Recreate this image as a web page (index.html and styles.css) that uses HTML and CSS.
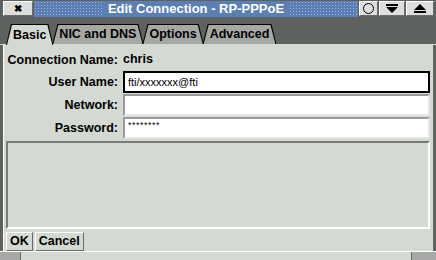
FILE: index.html
```html
<!DOCTYPE html>
<html lang="en">
<head>
  <meta charset="UTF-8">
  <title>Edit Connection - RP-PPPoE</title>
  <link rel="stylesheet" href="styles.css">
</head>
<body>
  <div class="window">
    <div class="titlebar">
      <div class="tb-btn close">&#x2716;</div>
      <div class="title"><span>Edit Connection - RP-PPPoE</span></div>
      <div class="tb-btn circle"><span class="ring"></span></div>
      <div class="tb-btn shade">
        <svg width="12" height="9" viewBox="0 0 12 9"><rect x="0" y="0" width="12" height="2" fill="#000"/><polygon points="0,3 12,3 6,9" fill="#000"/></svg>
      </div>
      <div class="tb-btn max">
        <svg width="12" height="9" viewBox="0 0 12 9"><polygon points="6,0 12,6 0,6" fill="#000"/><rect x="0" y="7" width="12" height="2" fill="#000"/></svg>
      </div>
    </div>

    <div class="tabbar">
      <div class="tab active"><span class="tab-fill">Basic</span></div>
      <div class="tab"><span class="tab-fill">NIC and DNS</span></div>
      <div class="tab"><span class="tab-fill">Options</span></div>
      <div class="tab"><span class="tab-fill">Advanced</span></div>
    </div>

    <div class="content">
      <div class="form">
        <label>Connection Name:</label>
        <div class="value">chris</div>
        <label>User Name:</label>
        <div class="field focus">fti/xxxxxxx@fti</div>
        <label>Network:</label>
        <div class="field"></div>
        <label>Password:</label>
        <div class="field pw">********</div>
      </div>
      <div class="panel"></div>
      <div class="buttons">
        <div class="btn">OK</div>
        <div class="btn">Cancel</div>
      </div>
    </div>

    <div class="status">
      <div class="seg left"></div>
      <div class="seg mid"></div>
      <div class="seg right"></div>
    </div>
  </div>
</body>
</html>
```

FILE: styles.css
```css
body { margin: 0; background: #5e625e; font-family: "Liberation Sans", Arial, sans-serif; }
.window { width: 436px; height: 260px; background: #5e625e; display: flex; flex-direction: column; overflow: hidden; }

.titlebar { height: 17px; flex: none; display: flex; align-items: stretch; padding: 1px 2px 0 3px; box-sizing: border-box; gap: 1px; }
.tb-btn { background: #dcdedc; border: 1px solid; border-color: #fff #6a6a6a #6a6a6a #fff; box-sizing: border-box; display: flex; align-items: center; justify-content: center; height: 15px; }
.close { width: 30px; font-size: 10px; font-weight: bold; color: #000; }
.circle { width: 19px; }
.ring { width: 9px; height: 9px; border: 1px solid #000; border-radius: 50%; }
.shade { width: 26px; }
.max { width: 28px; }
.title { flex: 1; height: 16px; background-color: #5b7fb5; background-image: radial-gradient(circle, #9bb4dc 0.8px, transparent 1px); background-size: 3px 3px; display: flex; justify-content: center; align-items: center; }
.title span { background: #5b7fb5; color: #fff; font-weight: bold; font-size: 13px; padding: 0 4px; line-height: 16px; }

.tabbar { height: 28px; flex: none; display: flex; align-items: flex-end; padding-left: 6px; border-bottom: 1px solid #d4d9d2; box-sizing: border-box; }
.tab { background: #000; height: 20px; padding: 1px 1px 0 1px; margin-right: -1px; clip-path: polygon(5px 0, calc(100% - 5px) 0, 100% 100%, 0 100%); box-sizing: border-box; display: flex; }
.tab-fill { flex: 1; background: #a6a8a6; clip-path: polygon(5px 0, calc(100% - 5px) 0, 100% 100%, 0 100%); font-weight: bold; font-size: 12.5px; color: #000; padding: 0 6px; display: flex; align-items: center; line-height: 1; white-space: nowrap; }
.tab.active { height: 21px; margin-bottom: -1px; }
.tab.active .tab-fill { background: #d4d9d2; }

.content { background: #d4d9d2; flex: 1; margin: 0 2px 0 3px; border-left: 1px solid #fff; border-right: 1px solid #6a6a6a; display: flex; flex-direction: column; padding: 5px 3px 0 2px; }

.form { display: grid; grid-template-columns: 112px 1fr; column-gap: 5px; row-gap: 1px; align-items: center; }
.form label { text-align: right; font-weight: bold; font-size: 12.5px; color: #000; white-space: nowrap; }
.value { font-weight: bold; font-size: 12.5px; height: 19px; line-height: 19px; margin-bottom: 1px; }
.field { height: 22px; background: #fff; border: 2px solid; border-color: #9a9a9e #e4e6e4 #e4e6e4 #9a9a9e; box-sizing: border-box; font-size: 11px; padding-left: 3px; line-height: 18px; }
.field.focus { border: 2px solid #000; box-shadow: inset 0 0 0 1px #fff; }
.field.pw { font-size: 9px; letter-spacing: 0.5px; line-height: 12px; }

.panel { height: 88px; flex: none; margin-top: 2px; border: 2px solid; border-color: #7a7a7a #fff #fff #7a7a7a; box-sizing: border-box; }

.buttons { display: flex; gap: 2px; padding-top: 3px; }
.btn { font-weight: bold; font-size: 12.5px; height: 19px; line-height: 17px; padding: 0 3px; border: 1px solid; border-color: #fff #6a6a6a #6a6a6a #fff; box-sizing: border-box; }

.status { height: 8px; flex: none; display: flex; background: #d4d9d2; border-top: 1px solid #fff; }
.seg { border-right: 1px solid #6a6a6a; }
.seg.left { width: 20px; background: #a6a8a6; }
.seg.mid { flex: 1; }
.seg.right { width: 24px; background: #a6a8a6; border-right: none; }
```
